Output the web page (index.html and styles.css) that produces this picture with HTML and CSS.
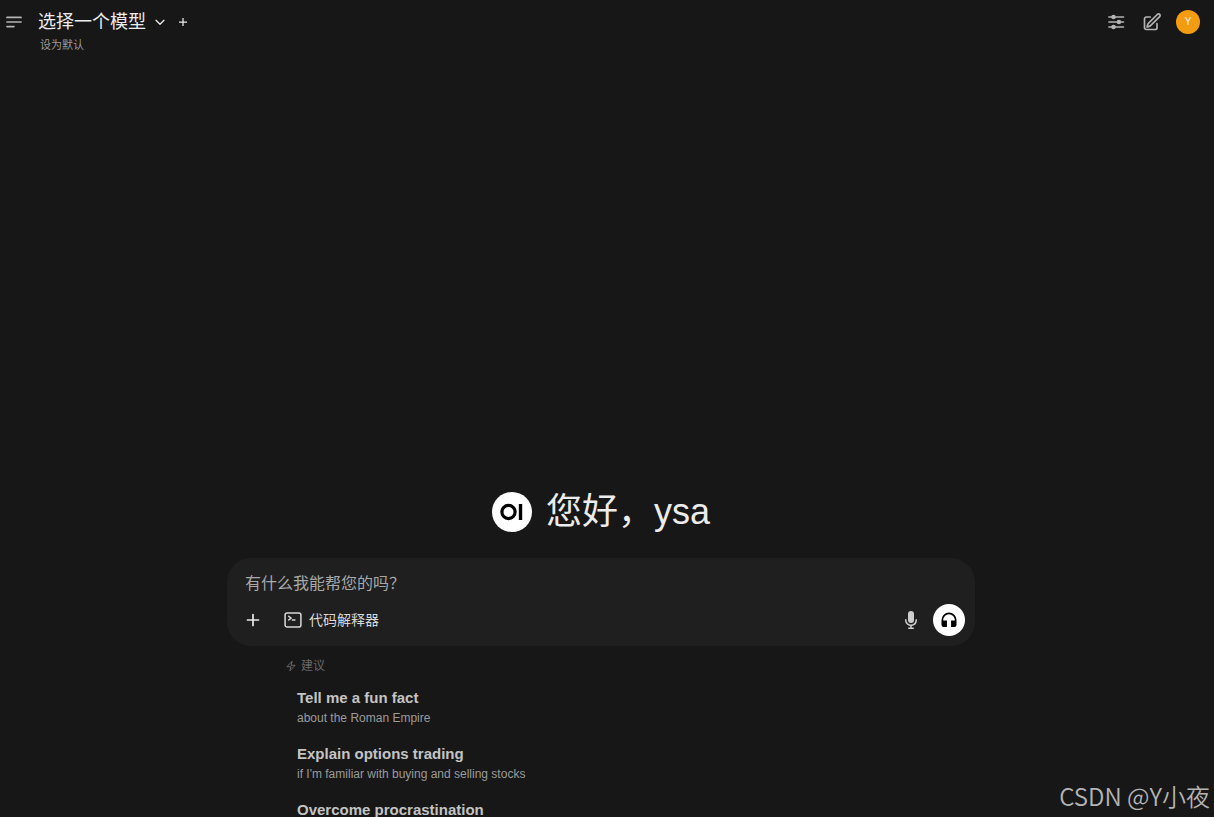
FILE: index.html
```html
<!DOCTYPE html>
<html lang="zh-CN">
<head>
    <meta charset="utf-8" />
    <meta name="viewport" content="width=device-width, initial-scale=1" />
    <title>Open WebUI</title>
    <link rel="stylesheet" href="styles.css">
</head>
<body>
    <header class="navbar">
        <button class="icon-button menu-button" aria-label="Menu">
            <svg width="20" height="20" viewBox="0 0 24 24" fill="none" stroke="currentColor" stroke-width="2" stroke-linecap="round"><path d="M3.5 6.5h17M3.5 12h17M3.5 17.5h8.500" /></svg>
        </button>
        <div class="model-selector">
            <div class="model-row">
                <button class="model-button">
                    选择一个模型
                    <svg width="12" height="12" viewBox="0 0 24 24" fill="none" stroke="currentColor" stroke-width="2.500" stroke-linecap="round" stroke-linejoin="round"><path d="M4 8.500l8 8 8-8" /></svg>
                </button>
                <button class="icon-button" aria-label="Add model">
                    <svg width="12" height="12" viewBox="0 0 24 24" fill="none" stroke="currentColor" stroke-width="2.500"><path d="M12 4v16M4 12h16" /></svg>
                </button>
            </div>
            <button class="default-button">设为默认</button>
        </div>
        <div class="navbar-actions">
            <button class="icon-button" aria-label="Controls">
                <svg width="20" height="20" viewBox="0 0 24 24" fill="none" stroke="currentColor" stroke-width="2" stroke-linecap="round"><path d="M3.500 6H21M3.500 12H21M3.500 18H21" /><circle cx="9" cy="6" r="1.700" fill="currentColor" /><circle cx="15.500" cy="12" r="1.700" fill="currentColor" /><circle cx="9" cy="18" r="1.700" fill="currentColor" /></svg>
            </button>
            <button class="icon-button" aria-label="New chat">
                <svg width="20" height="20" viewBox="0 0 24 24" fill="none" stroke="currentColor" stroke-width="2" stroke-linecap="round" stroke-linejoin="round"><path d="M16.862 4.487l1.687-1.688a1.875 1.875 0 1 1 2.652 2.652L10.582 16.070a4.500 4.500 0 0 1-1.897 1.130L6 18l.8-2.685a4.500 4.500 0 0 1 1.130-1.897l8.932-8.931zM18 14v4.750A2.250 2.250 0 0 1 15.750 21H5.250A2.250 2.250 0 0 1 3 18.750V8.250A2.250 2.250 0 0 1 5.250 6H10" /></svg>
            </button>
            <button class="avatar" aria-label="User menu">Y</button>
        </div>
    </header>

    <main class="chat">
        <div class="greeting">
            <svg class="logo" width="40" height="40" viewBox="0 0 40 40"><circle cx="20" cy="20" r="20" fill="#fff" /><circle cx="16.500" cy="20" r="6.600" fill="none" stroke="#000" stroke-width="3.200" /><path d="M28.500 12v16" stroke="#000" stroke-width="3.400" /></svg>
            <h1>您好，ysa</h1>
        </div>

        <form class="prompt-box">
            <input class="prompt-input" type="text" placeholder="有什么我能帮您的吗？" aria-label="有什么我能帮您的吗？">
            <div class="prompt-tools">
                <button type="button" class="icon-button" aria-label="More">
                    <svg width="20" height="20" viewBox="0 0 20 20" fill="none" stroke="currentColor" stroke-width="1.700" stroke-linecap="round"><path d="M10 4.500v11M4.500 10h11" /></svg>
                </button>
                <button type="button" class="code-button">
                    <svg width="20" height="20" viewBox="0 0 24 24" fill="none" stroke="currentColor" stroke-width="1.800" stroke-linecap="round" stroke-linejoin="round"><path d="M6.750 7.500l3 2.250-3 2.250m4.500 0h3" /><rect x="2.500" y="3.500" width="19" height="17" rx="2.500" /></svg>
                    代码解释器
                </button>
                <button type="button" class="icon-button mic-button" aria-label="Voice input">
                    <svg width="20" height="20" viewBox="0 0 20 20" fill="currentColor"><path d="M7 4a3 3 0 0 1 6 0v6a3 3 0 1 1-6 0V4z" /><path d="M5.500 9.643a.75.75 0 0 0-1.500 0V10c0 3.060 2.290 5.585 5.250 5.954V17.500h-1.500a.75.75 0 0 0 0 1.500h4.500a.75.75 0 0 0 0-1.500h-1.500v-1.546A6.001 6.001 0 0 0 16 10v-.357a.75.75 0 0 0-1.500 0V10a4.500 4.500 0 0 1-9 0v-.357z" /></svg>
                </button>
                <button type="button" class="call-button" aria-label="Call">
                    <svg width="20" height="20" viewBox="0 0 24 24" fill="#000"><path d="M12 3a9 9 0 0 0-9 9v6a2.500 2.500 0 0 0 2.500 2.500H9.500v-8H5V12a7 7 0 0 1 14 0v.5h-4.500v8h4A2.500 2.500 0 0 0 21 18v-6a9 9 0 0 0-9-9z" /></svg>
                </button>
            </div>
        </form>

        <section class="suggestions">
            <div class="suggestions-title">
                <svg width="12" height="12" viewBox="0 0 24 24" fill="none" stroke="currentColor" stroke-width="2" stroke-linejoin="round"><path d="M3.750 13.500l10.500-11.250L12 10.500h8.250L9.750 21.750 12 13.500H3.750z" /></svg>
                建议
            </div>
            <div class="suggestions-list">
                <button class="suggestion">
                    <span class="suggestion-name">Tell me a fun fact</span>
                    <span class="suggestion-text">about the Roman Empire</span>
                </button>
                <button class="suggestion">
                    <span class="suggestion-name">Explain options trading</span>
                    <span class="suggestion-text">if I'm familiar with buying and selling stocks</span>
                </button>
                <button class="suggestion">
                    <span class="suggestion-name">Overcome procrastination</span>
                </button>
            </div>
        </section>
    </main>

    <div class="watermark">CSDN @Y小夜</div>
</body>
</html>
```

FILE: styles.css
```css
* {
    box-sizing: border-box;
}

body {
    font-family: "Liberation Sans", "Noto Sans CJK SC", sans-serif;
    margin: 0;
    height: 100vh;
    display: flex;
    flex-direction: column;
    overflow: hidden;
    background-color: #171717;
    color: #ececec;
}

button, input {
    font-family: inherit;
    color: inherit;
    background: none;
    border: none;
    padding: 0;
    margin: 0;
}

button {
    cursor: pointer;
}

svg {
    display: block;
    flex-shrink: 0;
}

.icon-button {
    display: flex;
    align-items: center;
    justify-content: center;
}

.navbar {
    display: flex;
    align-items: flex-start;
    padding: 10px 14px 0 4px;
}

.menu-button {
    height: 24px;
    color: #b4b4b4;
}

.model-selector {
    padding-left: 14px;
}

.model-row {
    display: flex;
    align-items: center;
    gap: 11px;
    height: 24px;
}

.model-button {
    display: flex;
    align-items: center;
    gap: 8px;
    font-size: 18px;
    line-height: 24px;
}

.default-button {
    display: block;
    padding: 1px 0 0 2px;
    font-size: 11px;
    line-height: 20px;
    color: #9b9b9b;
}

.navbar-actions {
    display: flex;
    align-items: center;
    gap: 12px;
    margin-left: auto;
    color: #b4b4b4;
}

.navbar-actions button {
    width: 24px;
    height: 24px;
}

.avatar {
    border-radius: 50%;
    background-color: #f39c12;
    color: #ececec;
    font-size: 10px;
    line-height: 24px;
}

.chat {
    flex: 1;
    min-height: 0;
    display: flex;
    flex-direction: column;
    align-items: center;
    justify-content: flex-end;
    padding-right: 12px;
}

.greeting {
    display: flex;
    align-items: center;
    gap: 14px;
    margin-bottom: 22px;
}

.greeting h1 {
    margin: 0;
    font-size: 36px;
    font-weight: 400;
    line-height: 48px;
}

.prompt-box {
    width: 100%;
    max-width: 748px;
    padding: 12px 10px 10px 16px;
    border-radius: 24px;
    background-color: #1f1f1f;
}

.prompt-input {
    display: block;
    width: 100%;
    height: 28px;
    padding: 0 2px;
    font-size: 16px;
    outline: none;
}

.prompt-input::placeholder {
    color: #a8a8a8;
    opacity: 1;
}

.prompt-tools {
    display: flex;
    align-items: center;
    height: 32px;
    margin-top: 6px;
}

.code-button {
    display: flex;
    align-items: center;
    gap: 6px;
    margin-left: 20px;
    font-size: 14px;
    line-height: 20px;
    color: #d8d8d8;
}

.mic-button {
    margin-left: auto;
    color: #cdcdcd;
}

.call-button {
    display: flex;
    align-items: center;
    justify-content: center;
    width: 32px;
    height: 32px;
    margin-left: 12px;
    border-radius: 50%;
    background-color: #fff;
}

.suggestions {
    width: 100%;
    max-width: 632px;
    padding-top: 10px;
}

.suggestions-title {
    display: flex;
    align-items: center;
    gap: 4px;
    font-size: 12px;
    line-height: 20px;
    color: #676767;
}

.suggestions-list {
    height: 141px;
    padding-left: 12px;
    overflow: hidden;
}

.suggestion {
    display: flex;
    flex-direction: column;
    justify-content: flex-start;
    width: 100%;
    height: 56px;
    padding-top: 10px;
    text-align: left;
}

.suggestion-name {
    font-size: 15px;
    font-weight: 700;
    line-height: 24px;
    color: #c4c4c4;
}

.suggestion-text {
    font-size: 12px;
    line-height: 16px;
    color: #9b9b9b;
}

.watermark {
    position: absolute;
    right: 4px;
    bottom: 5px;
    font-family: "Noto Sans CJK SC", sans-serif;
    font-size: 24px;
    font-weight: 350;
    line-height: 32px;
    color: #b4b4b4;
}
```
